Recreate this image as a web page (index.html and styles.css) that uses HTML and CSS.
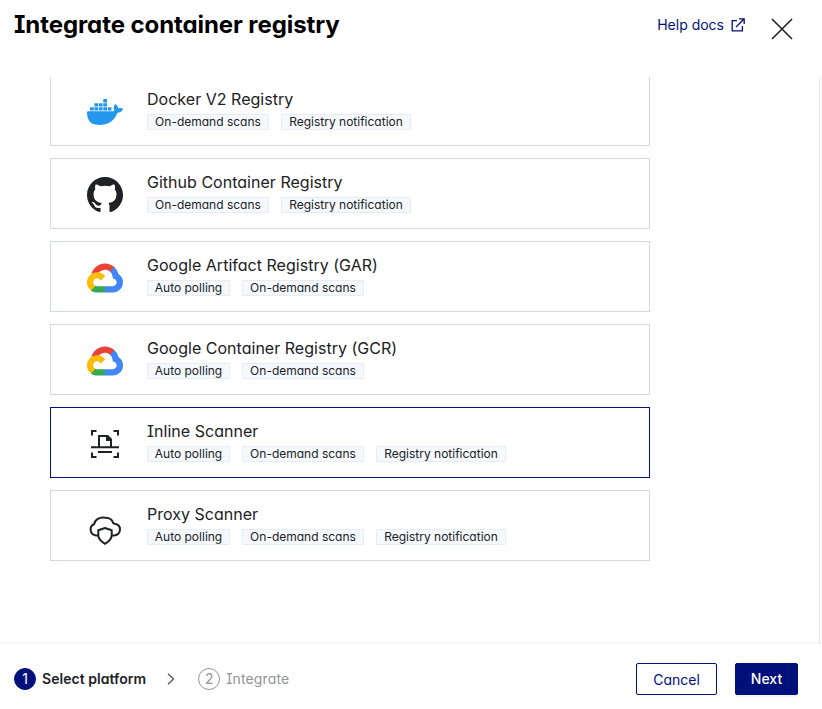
FILE: index.html
```html
<!DOCTYPE html>
<html lang="en">
<head>
<meta charset="utf-8">
<title>Integrate container registry</title>
<link rel="stylesheet" href="styles.css">
</head>
<body>
<header class="header">
  <h1 class="title">Integrate container registry</h1>
  <a class="help" href="#"><span>Help docs</span>
    <svg width="14" height="14" viewBox="0 0 14 14" fill="none" stroke="currentColor" stroke-width="1.3"><path d="M6 2.6H1.2v10.2h10.2V8M8 .8h5.2V6M13 1 5 9"/></svg>
  </a>
  <button class="close" aria-label="Close"><svg width="22" height="22" viewBox="0 0 22 22" fill="none" stroke="#202124" stroke-width="1.6"><path d="m1 1 20 20M21 1 1 21"/></svg></button>
</header>
<main class="list">
  <section class="card">
    <svg class="icon" viewBox="0 0 24 24" fill="#2496ed"><path d="M23.763 9.89c-.065-.051-.672-.51-1.954-.51-.338.001-.676.03-1.01.087-.248-1.7-1.653-2.53-1.716-2.566l-.344-.199-.226.327c-.284.438-.49.922-.612 1.43-.23.97-.09 1.882.403 2.661-.595.332-1.55.413-1.744.42H.751a.751.751 0 0 0-.75.748 11.376 11.376 0 0 0 .692 4.062c.545 1.428 1.355 2.48 2.41 3.124 1.18.723 3.1 1.137 5.275 1.137.983.003 1.963-.086 2.93-.266a12.248 12.248 0 0 0 3.823-1.389c.98-.567 1.86-1.288 2.61-2.136 1.252-1.418 1.998-2.997 2.553-4.4h.221c1.372 0 2.215-.549 2.68-1.009.309-.293.55-.65.707-1.046l.098-.288z"/><path d="M13.8 8.82h2.49v2.26H13.8zM10.84 8.82h2.49v2.26h-2.49zM7.91 8.82h2.49v2.26H7.91zM4.94 8.82h2.49v2.26H4.94zM2 8.82h2.49v2.26H2zM10.84 6.1h2.49v2.26h-2.49zM7.91 6.1h2.49v2.26H7.91zM4.94 6.1h2.49v2.26H4.94zM10.84 3.39h2.49v2.26h-2.49z"/></svg>
    <div><h2 class="name">Docker V2 Registry</h2><div class="tags"><span class="tag scan">On-demand scans</span><span class="tag notify">Registry notification</span></div></div>
  </section>
  <section class="card">
    <svg class="icon" viewBox="0 0 16 16" fill="#202124"><path d="M8 0C3.58 0 0 3.58 0 8c0 3.54 2.29 6.53 5.47 7.59.4.07.55-.17.55-.38 0-.19-.01-.82-.01-1.49-2.01.37-2.53-.49-2.69-.94-.09-.23-.48-.94-.82-1.13-.28-.15-.68-.52-.01-.53.63-.01 1.08.58 1.23.82.72 1.21 1.87.87 2.33.66.07-.52.28-.87.51-1.07-1.78-.2-3.64-.89-3.64-3.95 0-.87.31-1.59.82-2.15-.08-.2-.36-1.02.08-2.12 0 0 .67-.21 2.2.82.64-.18 1.32-.27 2-.27s1.36.09 2 .27c1.53-1.04 2.2-.82 2.2-.82.44 1.1.16 1.92.08 2.12.51.56.82 1.27.82 2.15 0 3.07-1.87 3.75-3.65 3.95.29.25.54.73.54 1.48 0 1.07-.01 1.93-.01 2.2 0 .21.15.46.55.38A8.01 8.01 0 0 0 16 8c0-4.42-3.58-8-8-8z"/></svg>
    <div><h2 class="name">Github Container Registry</h2><div class="tags"><span class="tag scan">On-demand scans</span><span class="tag notify">Registry notification</span></div></div>
  </section>
  <section class="card">
    <svg class="icon" viewBox="0 -25 256 256"><g id="cloud"><path fill="#ea4335" d="m170.252 56.819 22.253-22.253 1.483-9.37C153.437-11.677 88.976-7.496 52.42 33.92 42.267 45.423 34.734 59.764 30.717 74.573l7.97-1.123 44.505-7.34 3.436-3.513c19.797-21.742 53.27-24.667 76.128-6.168z"/><path fill="#4285f4" d="M224.205 73.918a100.25 100.25 0 0 0-30.217-48.722l-31.232 31.232a55.515 55.515 0 0 1 20.379 44.037v5.544c15.35 0 27.797 12.445 27.797 27.796 0 15.352-12.446 27.485-27.797 27.485h-55.671l-5.466 5.934v33.34l5.466 5.231h55.67c39.93.311 72.553-31.494 72.864-71.424a72.303 72.303 0 0 0-31.793-60.453"/><path fill="#34a853" d="M71.87 205.796h55.593V161.29H71.87a27.275 27.275 0 0 1-11.477-2.498l-7.887 2.42-22.409 22.253-1.952 7.574c12.567 9.489 27.9 14.825 43.647 14.757"/><path fill="#fbbc05" d="M71.87 61.425C31.94 61.664-.237 94.228.001 134.158a72.301 72.301 0 0 0 28.222 56.88l32.248-32.246c-13.99-6.322-20.208-22.786-13.887-36.776 6.32-13.99 22.786-20.208 36.775-13.888a27.796 27.796 0 0 1 13.887 13.888l32.248-32.248A72.224 72.224 0 0 0 71.87 61.425"/></g></svg>
    <div><h2 class="name">Google Artifact Registry (GAR)</h2><div class="tags"><span class="tag poll">Auto polling</span><span class="tag scan">On-demand scans</span></div></div>
  </section>
  <section class="card">
    <svg class="icon" viewBox="0 -25 256 256"><use href="#cloud"/></svg>
    <div><h2 class="name">Google Container Registry (GCR)</h2><div class="tags"><span class="tag poll">Auto polling</span><span class="tag scan">On-demand scans</span></div></div>
  </section>
  <section class="card selected">
    <svg class="icon" viewBox="0 0 36 36" fill="none" stroke="#202124" stroke-width="2"><path d="M5 9.500V5h4.500M26.500 5H31v4.500M5 26.500V31h4.500M26.500 31H31v-4.500M4 21.300h28M11 26h14M12 21V10h8l4 4v7"/><path fill="#202124" stroke="none" d="M19 9h2l4 4v2h-6z"/></svg>
    <div><h2 class="name">Inline Scanner</h2><div class="tags"><span class="tag poll">Auto polling</span><span class="tag scan">On-demand scans</span><span class="tag notify">Registry notification</span></div></div>
  </section>
  <section class="card">
    <svg class="icon" viewBox="0 0 36 36" fill="none" stroke="#202124" stroke-width="2" stroke-linejoin="round"><path d="M11 26.500H9A6 6 0 0 1 7.300 15C7.800 11 12.500 7.500 18.200 8.700 22 8.600 25.500 10.800 26.500 14.600 30.500 15 33 17.300 33 20.500S30.500 26.500 27 26.500H25"/><path d="m18 19 6.700 2.300v5c0 4-3.200 6.500-6.700 8.500-3.500-2-6.700-4.500-6.700-8.500v-5z"/></svg>
    <div><h2 class="name">Proxy Scanner</h2><div class="tags"><span class="tag poll">Auto polling</span><span class="tag scan">On-demand scans</span><span class="tag notify">Registry notification</span></div></div>
  </section>
</main>
<footer class="footer">
  <span class="step-num active">1</span><span class="step-label current">Select platform</span>
  <svg class="chevron" width="8" height="12" viewBox="0 0 8 12" fill="none" stroke="#55585c" stroke-width="1.3"><path d="m1 .8 5.500 5.200L1 11.200"/></svg>
  <span class="step-num">2</span><span class="step-label">Integrate</span>
  <button class="btn cancel">Cancel</button><button class="btn next">Next</button>
</footer>
</body>
</html>
```
FILE: styles.css
```css
* { box-sizing: border-box; }
body {
  margin: 0;
  width: 822px;
  height: 709px;
  overflow: hidden;
  display: flex;
  flex-direction: column;
  background: #fff;
  color: #202124;
  font-family: Inter, "Liberation Sans", sans-serif;
  font-feature-settings: "cv11", "cv08";
}
h1, h2 { margin: 0; }
button { font: inherit; font-feature-settings: inherit; }
.header { height: 77px; display: flex; align-items: flex-start; padding: 0 29px 0 14px; }
.title { flex: 1; padding-top: 10px; font-size: 24px; line-height: 30px; font-weight: 700; letter-spacing: -.08px; color: #000; white-space: nowrap; }
.help { display: flex; align-items: center; gap: 7px; margin-top: 15px; font-size: 14px; line-height: 20px; color: #00107a; text-decoration: none; }
.close { display: flex; margin: 18px 0 0 26px; padding: 0; border: 0; background: none; }
.list {
  width: 820px;
  height: 567px;
  overflow: hidden;
  display: flex;
  flex-direction: column;
  gap: 12px;
  padding-left: 50px;
  border-right: 1px solid #e4e6e8;
}
.card {
  flex: none;
  width: 600px;
  height: 71px;
  display: flex;
  padding: 12px 0 0 36px;
  border: 1px solid #d5d9dd;
}
.card:first-child { margin-top: -2px; }
.card.selected { border-color: #00107a; }
.icon { width: 36px; height: 36px; margin: 6px 24px 0 0; }
.name { font-size: 16px; line-height: 22px; font-weight: 400; letter-spacing: .02px; white-space: nowrap; }
.tags { display: flex; gap: 12px; margin-top: 4px; }
.tag {
  height: 16px;
  text-align: center;
  font-size: 12px;
  line-height: 14px;
  white-space: nowrap;
  background: #f5f9fd;
  border: 1px solid #e6edf2;
  border-radius: 1px;
}
.poll { width: 83px; }
.scan { width: 122px; }
.notify { width: 130px; }
.footer {
  height: 65px;
  display: flex;
  align-items: center;
  padding: 5px 24px 0 14px;
  box-shadow: 0 0 3px rgba(0, 0, 0, .1);
  background: #fff;
  font-size: 14px;
}
.step-num {
  width: 22px;
  height: 22px;
  border: 1px solid #929497;
  border-radius: 50%;
  text-align: center;
  line-height: 20px;
  color: #929497;
}
.step-num.active { background: #00107a; border-color: #00107a; color: #fff; }
.step-label { margin-left: 6px; padding-bottom: 2px; letter-spacing: .15px; color: #929497; white-space: nowrap; }
.step-label.current { font-weight: 600; letter-spacing: .04px; color: #202124; }
.chevron { margin: 0 23px 0 21px; }
.btn { height: 32px; padding: 0; border: 1px solid #00107a; border-radius: 2px; }
.cancel { width: 81px; margin-left: auto; background: #fff; color: #00107a; }
.next { width: 63px; margin-left: 18px; padding-bottom: 2px; background: #00107a; color: #fff; font-weight: 500; box-shadow: 0 2px 2px rgba(0, 0, 0, .06); }
```
